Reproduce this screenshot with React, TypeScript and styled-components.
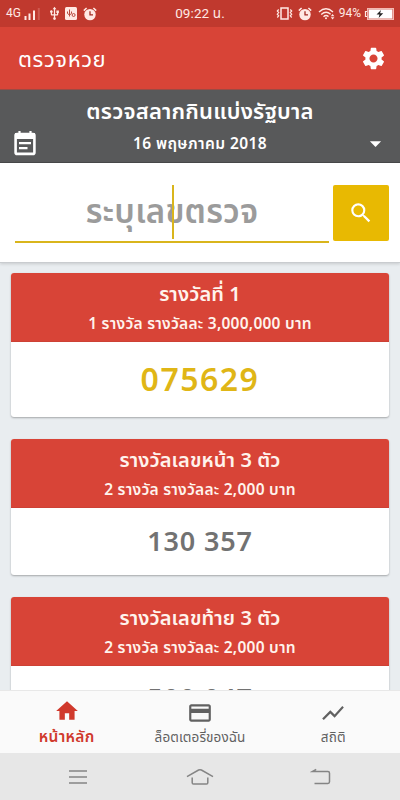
import React from "react";
import styled, { createGlobalStyle } from "styled-components";
import {
  MdSettings,
  MdArrowDropDown,
  MdSearch,
  MdHome,
  MdCreditCard,
  MdShowChart,
  MdUsb,
} from "react-icons/md";

const GlobalStyle = createGlobalStyle`
  * { box-sizing: border-box; }
  body { margin: 0; background: #e9edf0; }
`;

const Screen = styled.div`
  width: 400px;
  height: 800px;
  display: flex;
  flex-direction: column;
  overflow: hidden;
  background: #e9edf0;
  font-family: "Noto Sans", "Noto Sans Thai", "Open Sans", sans-serif;
`;

const StatusBar = styled.div`
  flex: none;
  height: 27px;
  padding: 0 6px 0 6px;
  display: grid;
  grid-template-columns: 1fr auto 1fr;
  align-items: center;
  background: #c0392e;
  color: #ffe9e4;
  font-family: Roboto, "Noto Sans Thai", sans-serif;
`;

const StatusGroup = styled.div<{ $end?: boolean }>`
  display: flex;
  align-items: center;
  justify-content: ${(p) => (p.$end ? "flex-end" : "flex-start")};
  svg { display: block; flex: none; }
`;

const StatusText = styled.span<{ $size: number; $spacing?: number }>`
  font-size: ${(p) => p.$size}px;
  letter-spacing: ${(p) => p.$spacing ?? 0}px;
  line-height: 27px;
  white-space: nowrap;
`;

const Gap = styled.span<{ $w: number }>`
  flex: none;
  width: ${(p) => p.$w}px;
`;

const AppBar = styled.header`
  flex: none;
  height: 62px;
  padding: 0 13px 0 18px;
  display: flex;
  align-items: center;
  justify-content: space-between;
  background: #d84437;
  color: #fff;
`;

const Text = styled.div<{
  $size: number;
  $line: number;
  $weight?: number;
  $spacing?: number;
  $color?: string;
}>`
  font-size: ${(p) => p.$size}px;
  line-height: ${(p) => p.$line}px;
  height: ${(p) => p.$line}px;
  font-weight: ${(p) => p.$weight ?? 600};
  letter-spacing: ${(p) => p.$spacing ?? 0}px;
  color: ${(p) => p.$color ?? "inherit"};
  text-align: center;
  white-space: nowrap;
`;

const DrawPicker = styled.section`
  flex: none;
  height: 74px;
  padding-top: 5px;
  background: #58595a;
  border-top: 1px solid #9b4a43;
  border-bottom: 1px solid #48494a;
  color: #fff;
`;

const DateRow = styled.div`
  display: grid;
  grid-template-columns: 50px 1fr 50px;
  align-items: center;
  height: 36px;
  svg { display: block; margin: 0 auto; }
`;

const SearchPanel = styled.section`
  flex: none;
  height: 100px;
  padding: 22px 11px 0 15px;
  display: flex;
  justify-content: space-between;
  background: #fff;
  border-bottom: 1px solid #c9cccf;
  box-shadow: 0 1px 3px rgba(0, 0, 0, 0.15);
`;

const NumberField = styled.div`
  position: relative;
  width: 314px;
  height: 58px;
  border-bottom: 2px solid #d9b51c;
`;

const Caret = styled.span`
  position: absolute;
  left: 157px;
  top: 0;
  width: 2px;
  height: 54px;
  background: #d9b51c;
`;

const SearchButton = styled.button`
  width: 56px;
  height: 56px;
  padding: 0;
  border: 0;
  border-radius: 2px;
  background: #e8b902;
  color: #fff;
  display: flex;
  align-items: center;
  justify-content: center;
`;

const Results = styled.main`
  flex: 1;
  min-height: 0;
  overflow: hidden;
  padding: 10px 11px 0;
  display: flex;
  flex-direction: column;
  gap: 22px;
`;

const Card = styled.article<{ $height: number }>`
  flex: none;
  height: ${(p) => p.$height}px;
  display: flex;
  flex-direction: column;
  border-radius: 3px;
  background: #fff;
  box-shadow: 0 1px 2px rgba(0, 0, 0, 0.3);
`;

const CardHead = styled.div`
  height: 69px;
  padding-top: 6px;
  border-radius: 3px 3px 0 0;
  background: #d84437;
  border-bottom: 1px solid #cd4135;
  color: #fff3ec;
`;

const CardBody = styled.div`
  flex: 1;
  display: flex;
  align-items: center;
  justify-content: center;
  padding-bottom: 1px;
`;

const TabBar = styled.nav`
  flex: none;
  height: 63px;
  display: grid;
  grid-template-columns: repeat(3, 1fr);
  background: #fafafa;
  border-top: 1px solid #e8e8e8;
`;

const Tab = styled.div<{ $active?: boolean }>`
  display: flex;
  flex-direction: column;
  align-items: center;
  padding-top: ${(p) => (p.$active ? 7 : 9)}px;
  color: ${(p) => (p.$active ? "#d0392c" : "#616161")};
  svg { display: block; }
`;

const SystemNav = styled.div`
  flex: none;
  height: 47px;
  padding: 0 66px;
  display: flex;
  align-items: center;
  justify-content: space-between;
  background: #e7e7e7;
`;

const Alarm = () => (
  <svg width="14" height="14" viewBox="0 0 14 14">
    <circle cx="7" cy="7.6" r="5.7" fill="currentColor" />
    <path d="M.8 3.6 3.6 1M13.2 3.6 10.4 1" stroke="currentColor" strokeWidth="1.5" />
    <path d="M7 4.2v3.7h3" fill="none" stroke="#a32b22" strokeWidth="1.3" />
  </svg>
);

const Signal = () => (
  <svg width="17" height="13" viewBox="0 0 17 13">
    <path d="M1.5 9v4M5.5 6.5V13M10 3.5V13" stroke="currentColor" strokeWidth="2" />
    <path d="M14.8 1v12" stroke="#cf5a50" strokeWidth="2" />
  </svg>
);

const DebugBadge = () => (
  <svg width="12" height="13" viewBox="0 0 12 13">
    <rect width="12" height="13" rx="1.5" fill="currentColor" />
    <path d="M4.5 2.5v7M2.5 4.5v2l2 1.5 2-1.5v-2" fill="none" stroke="#b8483e" strokeWidth="1" />
    <circle cx="8.6" cy="8" r="1.5" fill="none" stroke="#b8483e" />
  </svg>
);

const Vibrate = () => (
  <svg width="17" height="13" viewBox="0 0 17 13" fill="none" stroke="currentColor">
    <rect x="5" y="1" width="7" height="11" strokeWidth="1.5" />
    <path d="M2.7 2.5 1.3 4l1.4 1.6L1.3 7.2l1.4 1.6-1.4 1.7M14.3 2.5 15.7 4l-1.4 1.6 1.4 1.6-1.4 1.6 1.4 1.7" strokeWidth="1.2" />
  </svg>
);

const Wifi = () => (
  <svg width="18" height="13" viewBox="0 0 18 13" fill="none" stroke="currentColor">
    <path d="M1 5Q8 -1.5 15 5M3.2 7.5Q8 3.2 12.6 7.2M5.5 9.8Q8 7.5 10.5 9.6" strokeWidth="1.4" />
    <circle cx="8" cy="11.3" r="1" fill="currentColor" stroke="none" />
    <path d="m12.8 9.2 1.8-2.2 1.8 2.2zM12.8 10.2l1.8 2.2 1.8-2.2z" fill="currentColor" stroke="none" />
  </svg>
);

const Battery = () => (
  <svg width="30" height="12" viewBox="0 0 30 12">
    <path d="M3.5 3.5h-2v5h2" fill="none" stroke="currentColor" strokeWidth="1.2" />
    <rect x="3.6" y=".6" width="25.8" height="10.8" fill="none" stroke="#f3b9b2" strokeWidth="1.2" />
    <rect x="4.6" y="1.4" width="23.8" height="9.2" fill="#fff" />
    <path d="M17 2 12.5 6.5h3L14.6 10l4.6-4.8h-3.1z" fill="#222" />
  </svg>
);

const CalendarNote = () => (
  <svg width="22" height="26" viewBox="0 0 22 26">
    <rect x="1.6" y="4.1" width="18.8" height="19.8" rx="1.5" fill="none" stroke="currentColor" strokeWidth="2.6" />
    <path d="M1 3h20v6H1z" fill="currentColor" />
    <path d="M5.5 1v4M16.5 1v4" stroke="currentColor" strokeWidth="2.2" />
    <path d="M5 13.2h12M5 18.2h8.5" stroke="currentColor" strokeWidth="2.2" />
  </svg>
);

const MenuLines = () => (
  <svg width="24" height="16" viewBox="0 0 24 16" stroke="#858585" strokeWidth="1.5">
    <path d="M3 2h18M3 8h18M3 14h18" />
  </svg>
);

const HomeOutline = () => (
  <svg width="28" height="18" viewBox="0 0 28 18" fill="none" stroke="#858585" strokeWidth="1.5">
    <path d="M1 8.6 12.6 2Q14 1.3 15.4 2L27 8.6M6.2 9.6v5.1q0 1.3 1.3 1.3h13q1.3 0 1.3-1.3V9.6" />
  </svg>
);

const BackArrow = () => (
  <svg width="24" height="18" viewBox="0 0 24 18" fill="none" stroke="#858585" strokeWidth="1.5">
    <path d="M6.2 1.3 2.3 3.6h15.6q1.6 0 1.6 1.6v8.6q0 1.6-1.6 1.6H4.5" />
  </svg>
);

type Prize = {
  title: string;
  detail: string;
  numbers: string;
  height: number;
  first?: boolean;
};

const prizes: Prize[] = [
  { title: "รางวัลที่ 1", detail: "1 รางวัล รางวัลละ 3,000,000 บาท", numbers: "075629", height: 144, first: true },
  { title: "รางวัลเลขหน้า 3 ตัว", detail: "2 รางวัล รางวัลละ 2,000 บาท", numbers: "130 357", height: 136 },
  { title: "รางวัลเลขท้าย 3 ตัว", detail: "2 รางวัล รางวัลละ 2,000 บาท", numbers: "500 047", height: 133 },
];

export default function App() {
  return (
    <Screen>
      <GlobalStyle />
      <StatusBar>
        <StatusGroup>
          <StatusText $size={12}>4G</StatusText>
          <Gap $w={3} />
          <Signal />
          <Gap $w={6} />
          <MdUsb size={15} />
          <Gap $w={3} />
          <DebugBadge />
          <Gap $w={6} />
          <Alarm />
        </StatusGroup>
        <StatusText $size={13.5} $spacing={0.1}>09:22 น.</StatusText>
        <StatusGroup $end>
          <Vibrate />
          <Gap $w={5} />
          <Alarm />
          <Gap $w={6} />
          <Wifi />
          <Gap $w={3} />
          <StatusText $size={12}>94%</StatusText>
          <Gap $w={3} />
          <Battery />
        </StatusGroup>
      </StatusBar>
      <AppBar>
        <Text $size={22} $line={30} $weight={400} $spacing={0.6}>ตรวจหวย</Text>
        <MdSettings size={27} />
      </AppBar>
      <DrawPicker>
        <Text $size={22} $line={30} $spacing={0.2}>ตรวจสลากกินแบ่งรัฐบาล</Text>
        <DateRow>
          <CalendarNote />
          <Text $size={15.5} $line={30} $spacing={0.4}>16 พฤษภาคม 2018</Text>
          <MdArrowDropDown size={27} />
        </DateRow>
      </DrawPicker>
      <SearchPanel>
        <NumberField>
          <Text $size={33} $line={52} $spacing={0.2} $color="#9b9b9b">ระบุเลขตรวจ</Text>
          <Caret />
        </NumberField>
        <SearchButton aria-label="ค้นหา">
          <MdSearch size={26} />
        </SearchButton>
      </SearchPanel>
      <Results>
        {prizes.map((p) => (
          <Card key={p.title} $height={p.height}>
            <CardHead>
              <Text $size={20} $line={30} $spacing={0.1}>{p.title}</Text>
              <Text $size={15.5} $line={28} $spacing={0.25}>{p.detail}</Text>
            </CardHead>
            <CardBody>
              <Text
                $size={p.first ? 32 : 27}
                $line={40}
                $spacing={p.first ? 1.5 : 0.8}
                $color={p.first ? "#e0b616" : "#727272"}
              >
                {p.numbers}
              </Text>
            </CardBody>
          </Card>
        ))}
      </Results>
      <TabBar>
        <Tab $active>
          <MdHome size={26} />
          <Text $size={15.5} $line={25} $spacing={0.3}>หน้าหลัก</Text>
        </Tab>
        <Tab>
          <MdCreditCard size={26} />
          <Text $size={13.5} $line={22} $weight={400} $spacing={0.1}>ล็อตเตอรี่ของฉัน</Text>
        </Tab>
        <Tab>
          <MdShowChart size={26} />
          <Text $size={13.5} $line={22} $weight={400} $spacing={0.2}>สถิติ</Text>
        </Tab>
      </TabBar>
      <SystemNav>
        <MenuLines />
        <HomeOutline />
        <BackArrow />
      </SystemNav>
    </Screen>
  );
}
